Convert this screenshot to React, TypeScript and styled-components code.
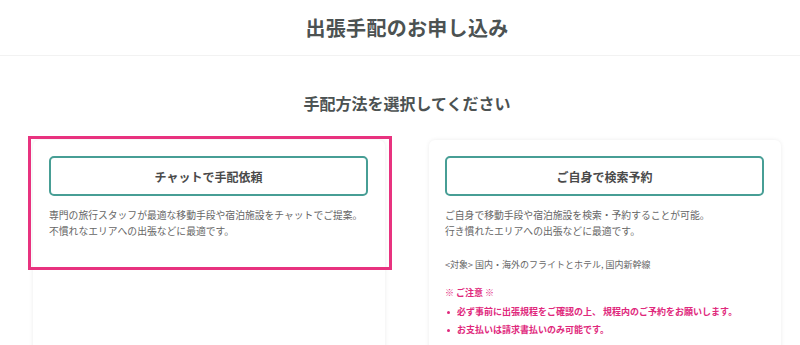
import React from "react";
import styled, { createGlobalStyle } from "styled-components";

const GlobalStyle = createGlobalStyle`
    html, body {
        margin: 0;
        padding: 0;
        background: #ffffff;
        overflow: hidden;
    }
    body {
        font-family: "Noto Sans CJK JP", "Noto Sans", sans-serif;
        color: #555;
    }
`

const cards = [
    {
        title: "チャットで手配依頼",
        lines: [
            "専門の旅行スタッフが最適な移動手段や宿泊施設をチャットでご提案。",
            "不慣れなエリアへの出張などに最適です。",
        ],
        selected: true,
    },
    {
        title: "ご自身で検索予約",
        lines: [
            "ご自身で移動手段や宿泊施設を検索・予約することが可能。",
            "行き慣れたエリアへの出張などに最適です。",
        ],
        target: "<対象> 国内・海外のフライトとホテル, 国内新幹線",
        notes: [
            "必ず事前に出張規程をご確認の上、 規程内のご予約をお願いします。",
            "お支払いは請求書払いのみ可能です。",
        ],
    },
]

export default function App() {
    return (
        <Page>
            <GlobalStyle/>
            <Header>
                <PageTitle>出張手配のお申し込み</PageTitle>
            </Header>
            <Main>
                <SectionTitle>手配方法を選択してください</SectionTitle>
                <CardGrid>
                    {cards.map(card => (
                        <Card key={card.title}>
                            {card.selected && <Highlight/>}
                            <MethodButton type={"button"}>{card.title}</MethodButton>
                            <Description>
                                {card.lines.map(line => <div key={line}>{line}</div>)}
                            </Description>
                            {card.target && <Target>{card.target}</Target>}
                            {card.notes && (
                                <Notice>
                                    <NoticeTitle>※ ご注意 ※</NoticeTitle>
                                    <NoticeList>
                                        {card.notes.map(note => <NoticeItem key={note}>{note}</NoticeItem>)}
                                    </NoticeList>
                                </Notice>
                            )}
                        </Card>
                    ))}
                </CardGrid>
            </Main>
        </Page>
    )
}

const Page = styled.div`
    width: 814px;
    height: 345px;
    overflow: hidden;
`

const Header = styled.header`
    height: 55px;
    display: flex;
    align-items: center;
    justify-content: center;
    border-bottom: 1px solid #f2f2f2;
`

const PageTitle = styled.h1`
    margin: 0;
    font-size: 20px;
    font-weight: 700;
    color: #4c5252;
    letter-spacing: 0.3px;
`

const Main = styled.main`
    display: flex;
    flex-direction: column;
    align-items: center;
    padding-top: 35px;
`

const SectionTitle = styled.h2`
    margin: 0;
    font-size: 16px;
    line-height: 24px;
    font-weight: 700;
    color: #4c5252;
`

const CardGrid = styled.div`
    margin-top: 25px;
    display: grid;
    grid-template-columns: 352px 352px;
    gap: 44px;
`

const Card = styled.section`
    position: relative;
    min-height: 260px;
    padding: 16px 17px 16px 16px;
    background: #fff;
    border-radius: 6px;
    box-shadow: 0 0 4px rgba(0, 0, 0, 0.08);
`

const Highlight = styled.div`
    position: absolute;
    top: -4px;
    left: -5px;
    width: 364px;
    height: 134px;
    box-sizing: border-box;
    border: 3px solid #e8327f;
    pointer-events: none;
`

const MethodButton = styled.button`
    display: block;
    width: 100%;
    height: 40px;
    border: 2px solid #479e95;
    border-radius: 5px;
    background: #fff;
    font-family: inherit;
    font-size: 12px;
    font-weight: 700;
    color: #4a4a4a;
`

const Description = styled.div`
    margin-top: 11px;
    font-size: 9.8px;
    line-height: 16px;
    color: #666;
`

const Target = styled.div`
    margin-top: 18px;
    font-size: 9px;
    line-height: 16px;
    color: #666;
`

const Notice = styled.div`
    margin-top: 12px;
    color: #e0287c;
    font-size: 9px;
    font-weight: 700;
`

const NoticeTitle = styled.div`
    line-height: 16px;
`

const NoticeList = styled.ul`
    list-style: none;
    margin: 2px 0 0;
    padding: 0;
`

const NoticeItem = styled.li`
    position: relative;
    padding-left: 12px;
    line-height: 18px;

    &::before {
        content: "";
        position: absolute;
        left: 2px;
        top: 8px;
        width: 3px;
        height: 3px;
        border-radius: 50%;
        background: #e0287c;
    }
`
